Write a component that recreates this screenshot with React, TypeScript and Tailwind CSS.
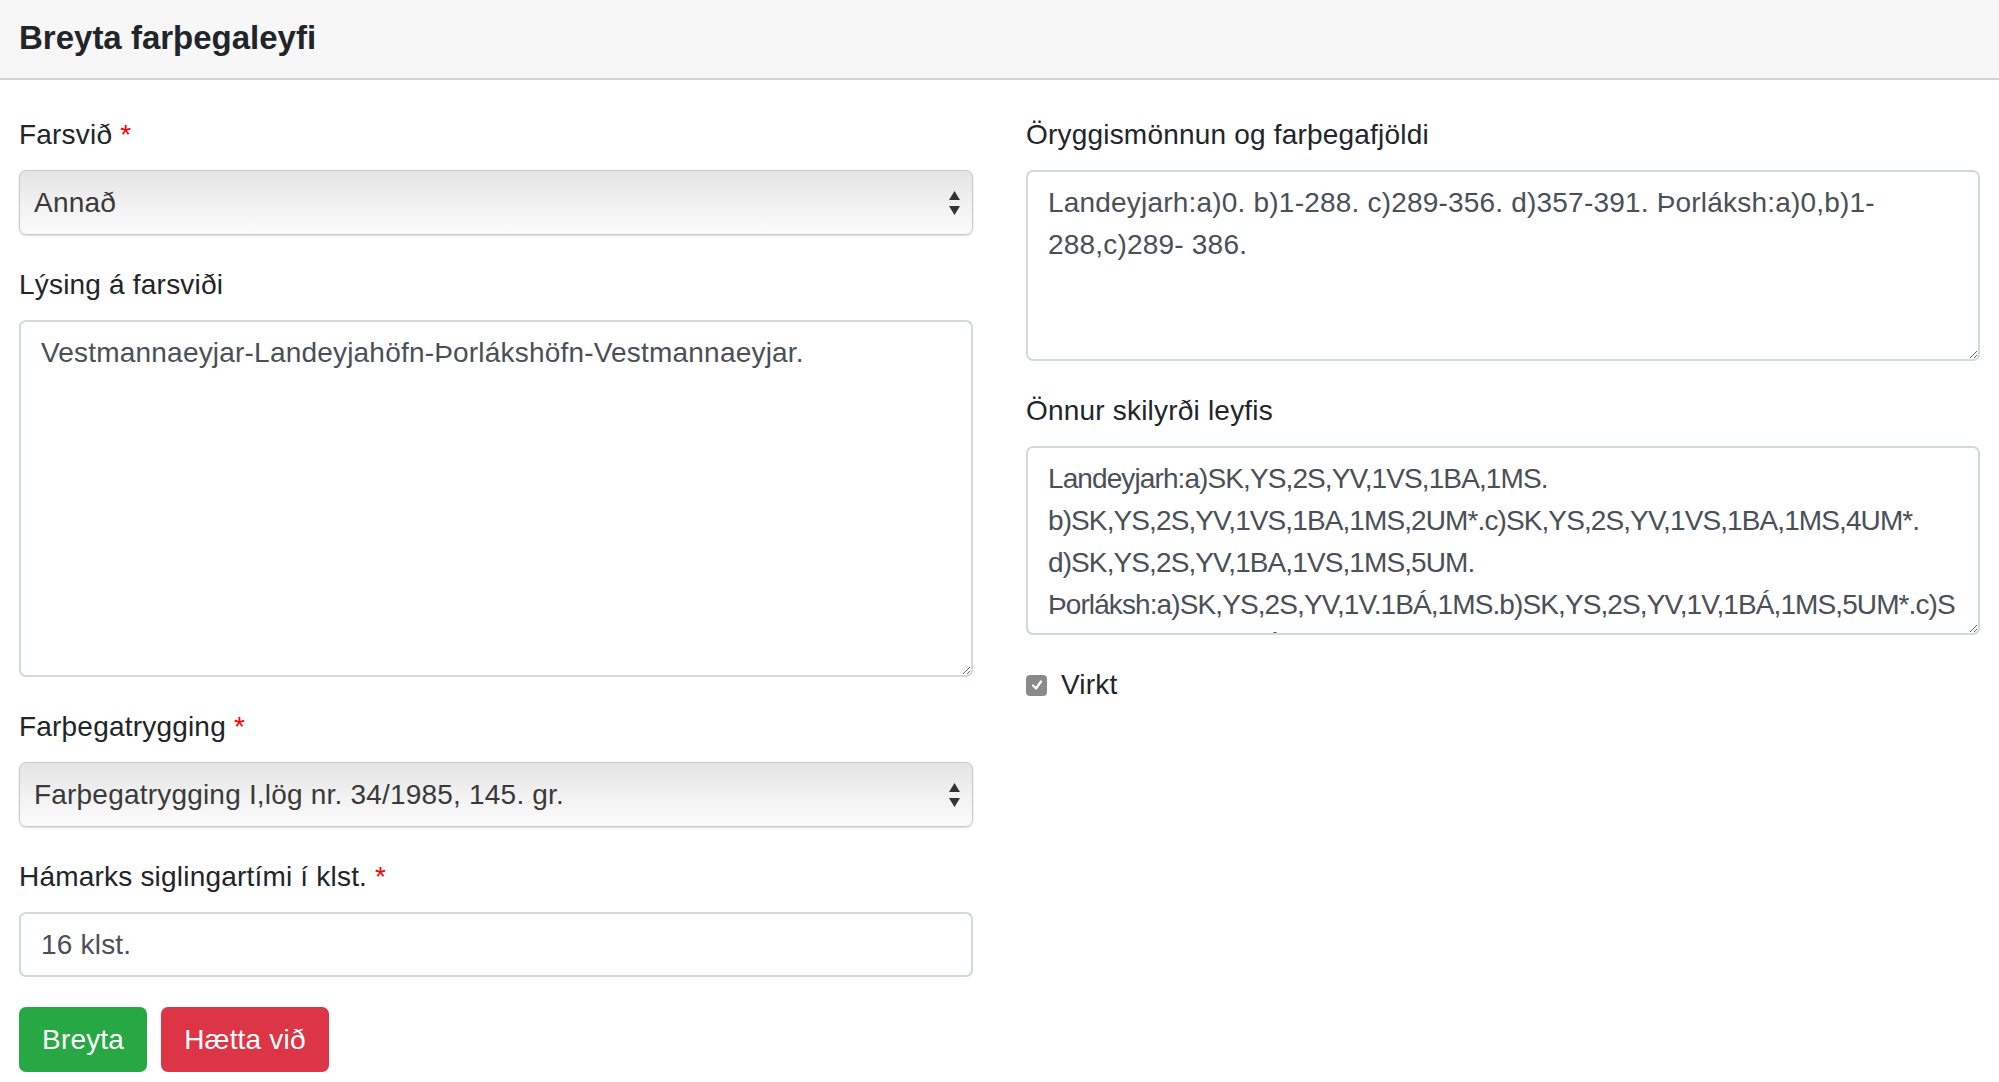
import React from 'react';

const safetyText =
  'Landeyjarh:a)0. b)1-288. c)289-356. d)357-391. Þorláksh:a)0,b)1-\n288,c)289- 386.';

const conditionsText = [
  'Landeyjarh:a)SK,YS,2S,YV,1VS,1BA,1MS.',
  'b)SK,YS,2S,YV,1VS,1BA,1MS,2UM*.c)SK,YS,2S,YV,1VS,1BA,1MS,4UM*.',
  'd)SK,YS,2S,YV,1BA,1VS,1MS,5UM.',
  'Þorláksh:a)SK,YS,2S,YV,1V.1BÁ,1MS.b)SK,YS,2S,YV,1V,1BÁ,1MS,5UM*.c)S',
  'K,YS,2S,YV,1V,1BÁ,1MS,6UM*.',
].join('\n');

function Label({ text, required }: { text: string; required?: boolean }) {
  return (
    <label className="block text-[28px] tracking-[0.2px] leading-[40px] mb-[15px] text-[#212529]">
      {text}
      {required && <span className="text-[#ff0000] ml-[8px]">*</span>}
    </label>
  );
}

function Select({ value }: { value: string }) {
  return (
    <div className="relative">
      <select
        defaultValue={value}
        className="appearance-none w-full h-[65px] pl-[14px] pr-[40px] text-[28px] tracking-[0.2px] text-[#3a3a3a] rounded-[7px] border border-[#c9c9c9] bg-gradient-to-b from-[#e4e4e4] via-[#f1f1f1] to-[#fbfbfb] shadow-[0_1px_2px_rgba(0,0,0,0.15)] outline-none"
      >
        <option value={value}>{value}</option>
      </select>
      {/* double arrow */}
      <svg
        className="absolute right-[12px] top-1/2 -translate-y-1/2 pointer-events-none"
        width="13"
        height="26"
        viewBox="0 0 13 26"
      >
        <path d="M6.5 1 L12 10 L1 10 Z" fill="#333" />
        <path d="M6.5 25 L12 16 L1 16 Z" fill="#333" />
      </svg>
    </div>
  );
}

const textareaCls =
  'block w-full rounded-[7px] border-2 border-[#d3d8dd] px-[20px] py-[10px] text-[28px] leading-[42px] text-[#495057] bg-white whitespace-pre overflow-hidden outline-none';

export default function App() {
  return (
    <div className="min-h-screen bg-white font-['Liberation_Sans',Arial,sans-serif]">
      {/* Header */}
      <div className="h-[80px] bg-[#f7f7f7] border-b-2 border-[#d4d4d4] flex items-center px-[19px]">
        <h5 className="text-[33px] font-bold text-[#212529] -mt-[3px]">Breyta farþegaleyfi</h5>
      </div>

      <div className="grid grid-cols-2 gap-[53px] px-[19px] pt-[35px]">
        {/* Left column */}
        <div>
          <div className="mb-[30px]">
            <Label text="Farsvið" required />
            <Select value="Annað" />
          </div>
          <div className="mb-[30px]">
            <Label text="Lýsing á farsviði" />
            <textarea
              readOnly
              className={`${textareaCls} tracking-[0.2px] h-[357px]`}
              defaultValue="Vestmannaeyjar-Landeyjahöfn-Þorlákshöfn-Vestmannaeyjar."
            />
          </div>
          <div className="mb-[30px]">
            <Label text="Farþegatrygging" required />
            <Select value="Farþegatrygging I,lög nr. 34/1985, 145. gr." />
          </div>
          <div className="mb-[30px]">
            <Label text="Hámarks siglingartími í klst." required />
            <input
              readOnly
              defaultValue="16 klst."
              className="block w-full h-[65px] rounded-[7px] border-2 border-[#d3d8dd] px-[20px] text-[28px] tracking-[0.2px] text-[#495057] outline-none"
            />
          </div>
          <div className="flex gap-[14px]">
            <button className="h-[65px] px-[23px] rounded-[7px] bg-[#28a745] text-white text-[28px] tracking-[0.2px]">
              Breyta
            </button>
            <button className="h-[65px] px-[23px] rounded-[7px] bg-[#dc3545] text-white text-[28px] tracking-[0.2px]">
              Hætta við
            </button>
          </div>
        </div>

        {/* Right column */}
        <div>
          <div className="mb-[30px]">
            <Label text="Öryggismönnun og farþegafjöldi" />
            <textarea readOnly className={`${textareaCls} tracking-[0.2px] h-[191px]`} defaultValue={safetyText} />
          </div>
          <div className="mb-[30px]">
            <Label text="Önnur skilyrði leyfis" />
            <textarea readOnly className={`${textareaCls} tracking-[-0.9px] h-[189px]`} defaultValue={conditionsText} />
          </div>
          <div className="flex items-center gap-[14px] h-[40px]">
            <span className="w-[21px] h-[21px] rounded-[4px] bg-[#8a8a8a] flex items-center justify-center">
              <svg width="14" height="14" viewBox="0 0 14 14">
                <path d="M3 7.5 L6 10.5 L11 3.5" stroke="white" strokeWidth="2.2" fill="none" strokeLinecap="round" strokeLinejoin="round" />
              </svg>
            </span>
            <span className="text-[28px] tracking-[0.2px] text-[#212529]">Virkt</span>
          </div>
        </div>
      </div>
    </div>
  );
}
